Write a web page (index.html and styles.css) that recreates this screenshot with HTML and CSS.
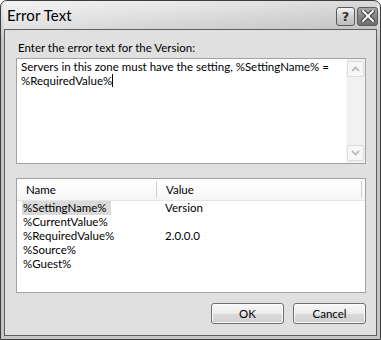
FILE: index.html
```html
<!DOCTYPE html>
<html>
<head>
<meta charset="utf-8">
<link rel="stylesheet" href="styles.css">
</head>
<body>
<div class="window">
  <div class="titlebar">
    <span class="title">Error Text</span>
    <div class="caption-buttons">
      <div class="cbtn help">?</div>
      <div class="cbtn close">
        <svg width="14" height="12" viewBox="0 0 14 12">
          <path d="M2 1 L12 11 M12 1 L2 11" stroke="#3a3a3a" stroke-width="4" stroke-linecap="square"/>
          <path d="M2 1 L12 11 M12 1 L2 11" stroke="#ffffff" stroke-width="2" stroke-linecap="square"/>
        </svg>
      </div>
    </div>
  </div>
  <div class="panel">
    <div class="label">Enter the error text for the Version:</div>
    <div class="textbox">
      <div class="text">Servers in this zone must have the setting, %SettingName% =<br>%RequiredValue%<span class="caret"></span></div>
      <div class="vscroll">
        <div class="arrow">
          <svg width="9" height="6" viewBox="0 0 9 6"><path d="M1 5 L4.5 1.5 L8 5" fill="none" stroke="#b4b4b4" stroke-width="1.6"/></svg>
        </div>
        <div class="arrow">
          <svg width="9" height="6" viewBox="0 0 9 6"><path d="M1 1 L4.5 4.5 L8 1" fill="none" stroke="#b4b4b4" stroke-width="1.6"/></svg>
        </div>
      </div>
    </div>
    <div class="listview">
      <div class="lv-header">
        <div class="col name">Name</div>
        <div class="col value">Value</div>
      </div>
      <div class="lv-row"><div class="cell name"><span class="sel">%SettingName%</span></div><div class="cell value">Version</div></div>
      <div class="lv-row"><div class="cell name"><span>%CurrentValue%</span></div><div class="cell value"></div></div>
      <div class="lv-row"><div class="cell name"><span>%RequiredValue%</span></div><div class="cell value">2.0.0.0</div></div>
      <div class="lv-row"><div class="cell name"><span>%Source%</span></div><div class="cell value"></div></div>
      <div class="lv-row"><div class="cell name"><span>%Guest%</span></div><div class="cell value"></div></div>
    </div>
    <div class="buttons">
      <div class="btn">OK</div>
      <div class="btn">Cancel</div>
    </div>
  </div>
</div>
</body>
</html>
```
FILE: styles.css
```css
html, body {
  margin: 0;
  padding: 0;
  background: #ffffff;
}
body {
  width: 381px;
  height: 340px;
  font-family: "Lato", "Noto Sans", sans-serif;
  font-size: 11.5px;
  color: #000000;
}
.window {
  box-sizing: border-box;
  width: 381px;
  height: 340px;
  border: 1px solid #3c3c3c;
  border-radius: 7px 7px 0 0;
  background: linear-gradient(180deg, #ececec 0px, #d4d4d4 28px, #c4c4c4 40px, #c4c4c4 100%);
  padding: 0 3px 3px 3px;
  display: flex;
  flex-direction: column;
}
.titlebar {
  height: 28px;
  display: flex;
  align-items: center;
  padding-left: 3px;
  background: linear-gradient(90deg, rgba(255,255,255,0.35) 0%, rgba(255,255,255,0) 40%, rgba(0,0,0,0.08) 100%);
}
.title {
  font-size: 15px;
  color: #000;
  letter-spacing: 0.1px;
}
.caption-buttons {
  margin-left: auto;
  display: flex;
  gap: 2px;
  margin-right: -1px;
  margin-top: 2px;
}
.cbtn {
  box-sizing: border-box;
  height: 19px;
  border: 1px solid #5a5a5a;
  border-radius: 3px;
  display: flex;
  align-items: center;
  justify-content: center;
}
.help {
  width: 19px;
  background: linear-gradient(180deg, #f4f4f4 0%, #d0d0d0 50%, #bdbdbd 100%);
  font-family: "DejaVu Sans", sans-serif;
  font-weight: bold;
  font-size: 13px;
  color: #333;
}
.close {
  width: 21px;
  background: linear-gradient(180deg, #a8a8a8 0%, #868686 50%, #6e6e6e 100%);
}
.panel {
  flex: 1;
  border: 1px solid #5e5e5e;
  background: #e0e0e0;
  padding: 10px 10px 0 11px;
  display: flex;
  flex-direction: column;
}
.label {
  padding-left: 2px;
  line-height: 15px;
  height: 16px;
}
.textbox {
  margin-top: 2px;
  height: 106px;
  box-sizing: border-box;
  border: 1px solid #a2a2a2;
  background: #ffffff;
  display: flex;
}
.text {
  flex: 1;
  padding: 1px 0 0 4px;
  line-height: 14px;
  white-space: nowrap;
}
.caret {
  display: inline-block;
  width: 1px;
  height: 13px;
  background: #000;
  vertical-align: -2px;
}
.vscroll {
  width: 17px;
  background: #f1f1f1;
  border-left: 1px solid #f7f7f7;
  display: flex;
  flex-direction: column;
  justify-content: space-between;
  padding: 2px 1px 2px 0;
}
.arrow {
  height: 16px;
  box-sizing: border-box;
  border: 1px solid #dcdcdc;
  border-radius: 2px;
  background: #f7f7f7;
  display: flex;
  align-items: center;
  justify-content: center;
}
.listview {
  margin-top: 14px;
  height: 115px;
  box-sizing: border-box;
  border: 1px solid #a2a2a2;
  background: #ffffff;
  overflow: hidden;
}
.lv-header {
  height: 21px;
  display: flex;
  border-bottom: 1px solid #e4e4e4;
  background: linear-gradient(180deg, #ffffff 0%, #f6f6f6 100%);
}
.col.name {
  width: 130px;
  padding-left: 9px;
  border-right: 1px solid #d0d0d0;
  margin: 2px 0;
  line-height: 17px;
}
.col.value {
  width: 195px;
  padding-left: 9px;
  border-right: 1px solid #d0d0d0;
  margin: 2px 0;
  line-height: 17px;
}
.lv-row {
  display: flex;
  height: 14px;
  line-height: 14px;
}
.cell.name {
  width: 143px;
  padding-left: 5px;
}
.cell.name span {
  padding: 0 1px;
}
.cell.name .sel {
  background: #d9d9d9;
  display: inline-block;
  width: 87px;
}
.cell.value {
  padding-left: 0;
}
.buttons {
  display: flex;
  justify-content: flex-end;
  gap: 9px;
  margin-top: 10px;
}
.btn {
  box-sizing: border-box;
  width: 73px;
  height: 21px;
  border: 1px solid #6f6f6f;
  border-radius: 3px;
  background: linear-gradient(180deg, #f8f8f8 0%, #ebebeb 50%, #dadada 52%, #d0d0d0 100%);
  display: flex;
  align-items: center;
  justify-content: center;
  box-shadow: inset 0 0 0 1px #fbfbfb;
}
```
